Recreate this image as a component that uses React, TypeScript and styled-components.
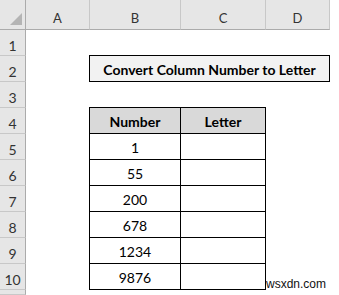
import React from "react";
import styled, { createGlobalStyle } from "styled-components";

const Global = createGlobalStyle`
  html, body { margin: 0; padding: 0; background: #ffffff; }
  body { font-family: Lato, "Liberation Sans", sans-serif; }
`;

const Sheet = styled.div`
  position: relative;
  width: 339px;
  height: 295px;
  overflow: hidden;
  display: grid;
  grid-template-columns: 26px 64px 91px 85px 64px 1fr;
  grid-template-rows: 30px repeat(10, 26px) 1fr;
  background: #ffffff;
`;

const Corner = styled.div`
  grid-column: 1;
  grid-row: 1;
  position: relative;
  background: #e6e6e6;
  border-right: 1px solid #ababab;
  border-bottom: 1px solid #ababab;
  &::after {
    content: "";
    position: absolute;
    right: 3px;
    bottom: 4px;
    width: 12px;
    height: 12px;
    background: #b4b4b4;
    clip-path: polygon(100% 0, 100% 100%, 0 100%);
  }
`;

const ColHeader = styled.div<{ $col: number }>`
  grid-column: ${(p) => p.$col};
  grid-row: 1;
  background: #e6e6e6;
  border-right: 1px solid #c8c8c8;
  border-bottom: 1px solid #ababab;
  display: flex;
  align-items: flex-end;
  justify-content: center;
  padding-bottom: 4px;
  box-sizing: border-box;
  font-family: Lato, "Liberation Sans", sans-serif;
  font-size: 13px;
  line-height: 13px;
  color: #333333;
`;

const RowHeader = styled.div<{ $row: number }>`
  grid-column: 1;
  grid-row: ${(p) => p.$row};
  background: #e6e6e6;
  border-right: 1px solid #ababab;
  border-bottom: 1px solid #c8c8c8;
  display: flex;
  align-items: flex-end;
  justify-content: center;
  padding-bottom: 2px;
  box-sizing: border-box;
  font-family: Lato, "Liberation Sans", sans-serif;
  font-size: 14px;
  line-height: 14px;
  color: #333333;
`;

const Title = styled.div`
  grid-column: 3 / 6;
  grid-row: 3;
  margin: -1px 0 0 -1px;
  border: 1px solid #000000;
  background: #f2f2f2;
  display: flex;
  align-items: center;
  justify-content: center;
  padding-top: 2px;
  box-sizing: border-box;
  font-family: Lato, "Liberation Sans", sans-serif;
  font-weight: 700;
  font-size: 14px;
  color: #000000;
`;

const Table = styled.div`
  grid-column: 3 / 5;
  grid-row: 5 / 12;
  margin: -1px 0 0 -1px;
  display: grid;
  grid-template-columns: 91px 85px;
  grid-auto-rows: 26px;
  border-left: 1px solid #000000;
  border-top: 1px solid #000000;
`;

const TCell = styled.div<{ $head?: boolean }>`
  border-right: 1px solid #000000;
  border-bottom: 1px solid #000000;
  background: ${(p) => (p.$head ? "#d9d9d9" : "#ffffff")};
  display: flex;
  align-items: center;
  justify-content: center;
  padding-top: 2px;
  box-sizing: border-box;
  font-family: Lato, "Liberation Sans", sans-serif;
  font-weight: ${(p) => (p.$head ? 700 : 400)};
  font-size: 14px;
  color: #000000;
`;

const Watermark = styled.div`
  position: absolute;
  left: 266px;
  top: 278px;
  font-family: "Liberation Sans", Arial, sans-serif;
  font-size: 12px;
  line-height: 12px;
  color: #111111;
`;

const cols = ["A", "B", "C", "D"];
const numbers = ["1", "55", "200", "678", "1234", "9876"];

export default function App() {
  return (
    <>
      <Global />
      <Sheet>
        <Corner />
        {cols.map((c, i) => (
          <ColHeader key={c} $col={i + 2}>
            {c}
          </ColHeader>
        ))}
        {Array.from({ length: 11 }, (_, i) => (
          <RowHeader key={i} $row={i + 2}>
            {i < 10 ? i + 1 : ""}
          </RowHeader>
        ))}
        <Title>Convert Column Number to Letter</Title>
        <Table>
          <TCell $head>Number</TCell>
          <TCell $head>Letter</TCell>
          {numbers.map((n) => (
            <React.Fragment key={n}>
              <TCell>{n}</TCell>
              <TCell />
            </React.Fragment>
          ))}
        </Table>
        <Watermark>wsxdn.com</Watermark>
      </Sheet>
    </>
  );
}
